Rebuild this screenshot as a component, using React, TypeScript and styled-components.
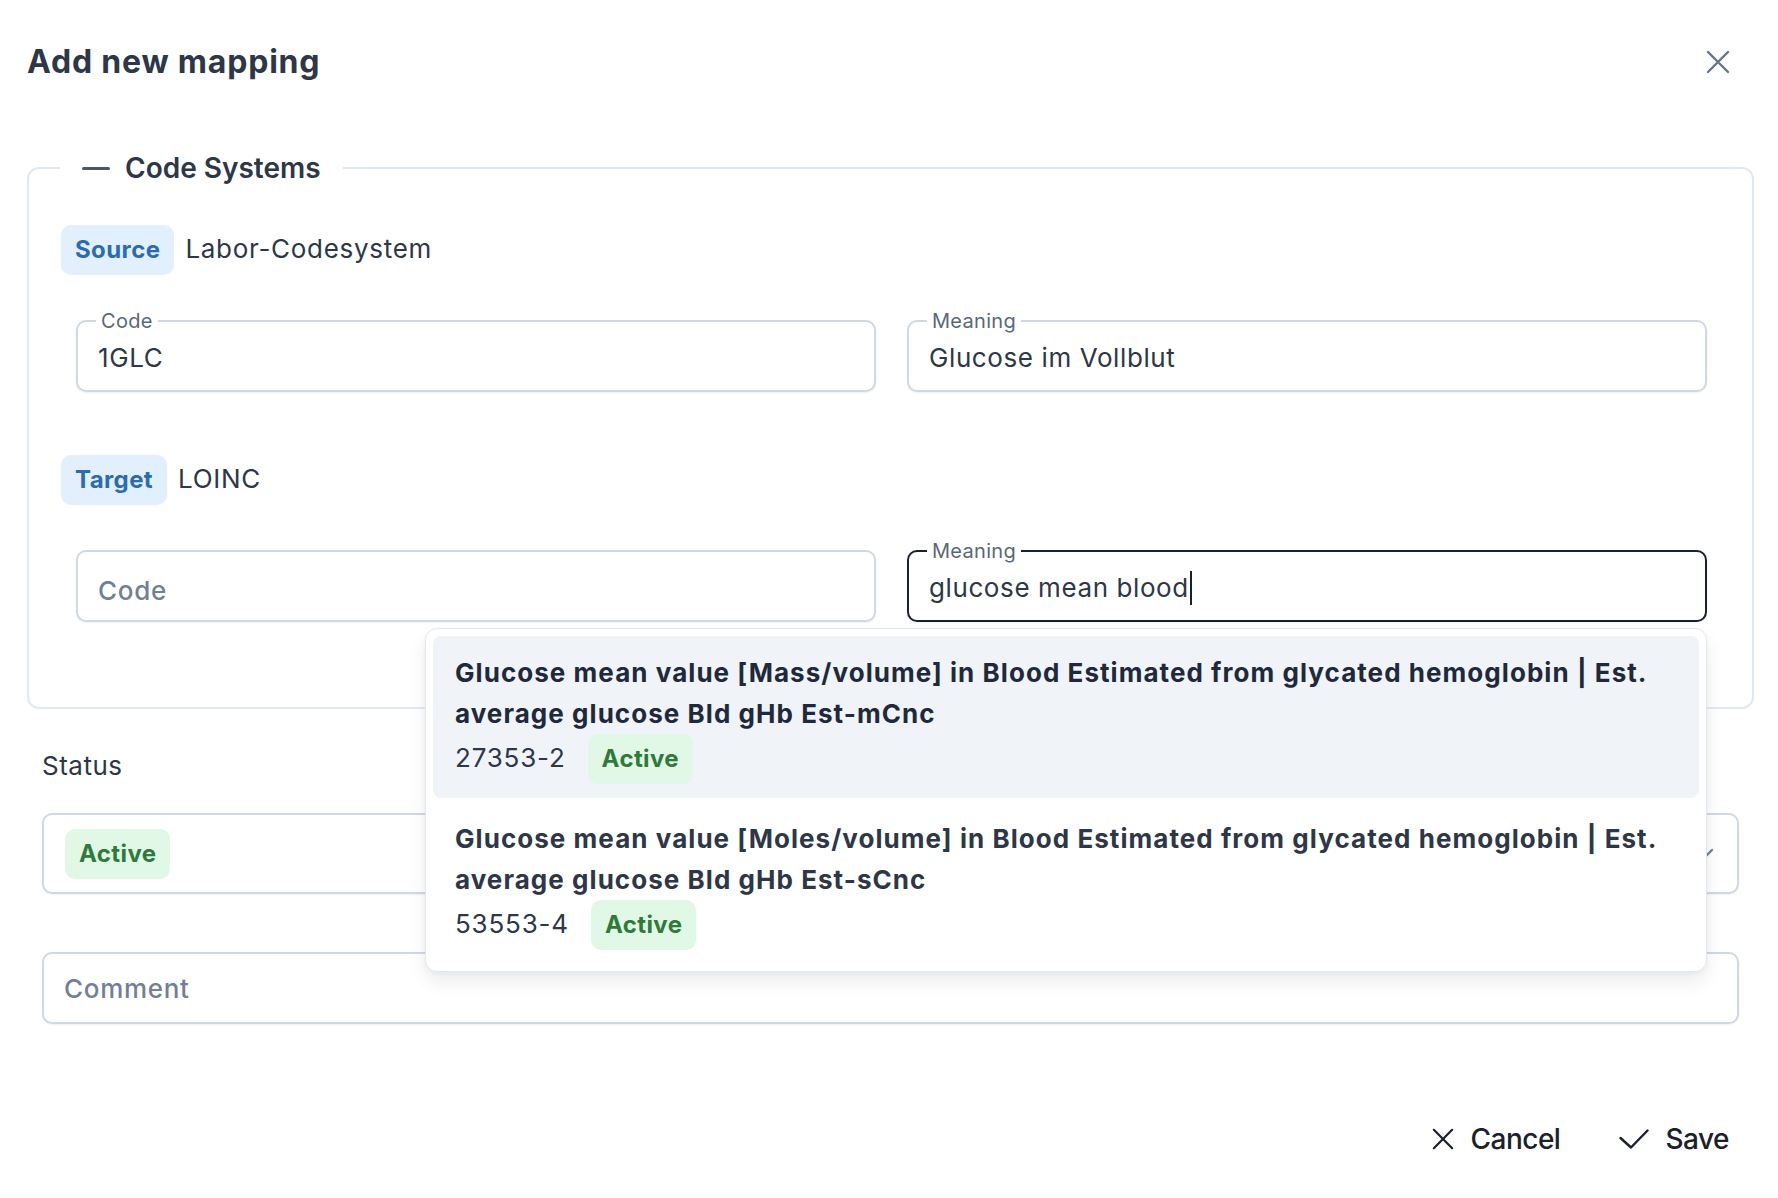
import React from 'react';
import styled, { createGlobalStyle } from 'styled-components';

const GlobalStyle = createGlobalStyle`
  *, *::before, *::after { box-sizing: border-box; }
  html, body { margin: 0; padding: 0; background: #ffffff; }
  body { font-family: Inter, "Noto Sans", sans-serif; color: #2d3748; }
`;

const Page = styled.div`
  width: 1778px;
  min-height: 1198px;
  padding: 0 24px 0 27px;
  background: #ffffff;
`;

const Header = styled.header`
  display: flex;
  align-items: center;
  justify-content: space-between;
  padding: 42px 24px 0 0;
`;

const Title = styled.h1`
  margin: 0;
  font-size: 32px;
  line-height: 40px;
  font-weight: 700;
  letter-spacing: 0.8px;
  color: #2d3748;
`;

const IconButton = styled.button`
  display: flex;
  padding: 0;
  border: 0;
  background: none;
  color: #64748b;
  cursor: pointer;
`;

const Group = styled.fieldset`
  margin: 68px 0 0;
  padding: 0;
  min-width: 0;
  border: 2px solid #e2e8f0;
  border-radius: 12px;
`;

const Legend = styled.legend`
  margin-left: 31px;
  padding: 0 22px;
  font-size: 28px;
  line-height: 36px;
  font-weight: 600;
  color: #2d3748;
`;

const Dash = styled.span`
  display: inline-block;
  width: 28px;
  height: 3px;
  margin-right: 15px;
  vertical-align: middle;
  background: #4a5568;
  border-radius: 2px;
  position: relative;
  top: -2px;
`;

const GroupBody = styled.div`
  padding: 39px 32px 85px;
`;

const SystemRow = styled.div<{ $gapTop?: number }>`
  display: flex;
  align-items: baseline;
  gap: 11px;
  margin-top: ${p => p.$gapTop ?? 0}px;
  font-size: 26px;
  letter-spacing: 0.7px;
  color: #2d3748;
`;

const Tag = styled.span<{ $tone: 'blue' | 'green' }>`
  display: inline-block;
  padding: 10px 14px;
  border-radius: 10px;
  font-size: 24px;
  line-height: 30px;
  font-weight: 700;
  letter-spacing: 0.4px;
  background: ${p => (p.$tone === 'blue' ? '#e2effc' : '#e1f8e6')};
  color: ${p => (p.$tone === 'blue' ? '#2b6cb0' : '#2f7a3b')};
`;

const FieldGrid = styled.div`
  display: grid;
  grid-template-columns: 1fr 1fr;
  gap: 31px;
  margin: 45px 13px 0 15px;
`;

const FieldBox = styled.div<{ $focused?: boolean }>`
  position: relative;
  display: flex;
  align-items: center;
  height: 72px;
  padding: 0 20px;
  border: 2px solid ${p => (p.$focused ? '#1a202c' : '#cfd8e3')};
  border-radius: 10px;
  background: #ffffff;
  box-shadow: 0 1px 2px rgba(15, 23, 42, 0.06);
`;

const FieldLabel = styled.span`
  position: absolute;
  top: -13px;
  left: 18px;
  padding: 0 5px;
  background: #ffffff;
  font-size: 20px;
  line-height: 24px;
  letter-spacing: 0.3px;
  color: #5a6779;
`;

const FieldValue = styled.span`
  display: flex;
  align-items: center;
  padding-top: 4px;
  font-size: 26px;
  line-height: 36px;
  letter-spacing: 0.6px;
  color: #2d3748;
`;

const Placeholder = styled.span<{ $shift?: number }>`
  padding-top: ${p => p.$shift ?? 2}px;
  font-size: 26px;
  line-height: 36px;
  font-weight: 500;
  letter-spacing: 0.7px;
  color: #718096;
`;

const Caret = styled.span`
  display: inline-block;
  width: 2px;
  height: 34px;
  margin-left: 1px;
  background: #1a202c;
`;

const Menu = styled.div`
  position: absolute;
  top: calc(100% + 8px);
  right: -2px;
  z-index: 10;
  width: 1282px;
  display: flex;
  flex-direction: column;
  gap: 4px;
  padding: 7px;
  background: #ffffff;
  border: 1px solid #e2e8f0;
  border-radius: 12px;
  box-shadow: 0 10px 18px rgba(15, 23, 42, 0.08), 0 2px 4px rgba(15, 23, 42, 0.04);
`;

const Option = styled.div<{ $active?: boolean }>`
  padding: 16px 10px 14px 22px;
  border-radius: 8px;
  background: ${p => (p.$active ? '#f0f3f8' : '#ffffff')};
`;

const OptionTitle = styled.div<{ $active?: boolean }>`
  font-size: 26px;
  line-height: 41px;
  font-weight: 700;
  letter-spacing: 1.05px;
  color: ${p => (p.$active ? '#1e293b' : '#2d3748')};
`;

const OptionMeta = styled.div`
  display: flex;
  align-items: baseline;
  gap: 22px;
  font-size: 26px;
  letter-spacing: 0.8px;
  color: #2d3748;
`;

const Lower = styled.div`
  padding: 0 15px;
`;

const StatusLabel = styled.div`
  margin-top: 39px;
  font-size: 26px;
  line-height: 36px;
  letter-spacing: 0.5px;
  color: #2d3748;
`;

const SelectBox = styled.div`
  display: flex;
  align-items: center;
  justify-content: space-between;
  height: 81px;
  margin-top: 29px;
  padding: 0 23px 0 21px;
  border: 2px solid #cfd8e3;
  border-radius: 10px;
  box-shadow: 0 1px 2px rgba(15, 23, 42, 0.06);
  color: #718096;
`;

const CommentWrap = styled.div`
  margin-top: 58px;
`;

const Footer = styled.footer`
  display: flex;
  justify-content: flex-end;
  gap: 15px;
  margin-top: 87px;
  padding-right: 3px;
`;

const ActionButton = styled.button`
  display: flex;
  align-items: center;
  gap: 16px;
  padding: 10px 22px;
  border: 0;
  background: none;
  font-family: Inter, "Noto Sans", sans-serif;
  font-size: 28px;
  line-height: 36px;
  font-weight: 500;
  letter-spacing: -0.5px;
  color: #1a202c;
  cursor: pointer;
`;

const XIcon = ({ size }: { size: number }) => (
  <svg width={size} height={size} viewBox="0 0 24 24" fill="none" stroke="currentColor" strokeWidth={2.4} strokeLinecap="round">
    <path d="M2 2 22 22M22 2 2 22" />
  </svg>
);

const CheckIcon = () => (
  <svg width="30" height="20" viewBox="0 0 30 20" fill="none" stroke="currentColor" strokeWidth={2.4} strokeLinecap="round" strokeLinejoin="round">
    <polyline points="1.5,9 12,18.5 28.5,1.5" />
  </svg>
);

const ChevronDown = () => (
  <svg width="20" height="12" viewBox="0 0 20 12" fill="none" stroke="currentColor" strokeWidth={2.4} strokeLinecap="round" strokeLinejoin="round">
    <polyline points="2,2 10,10 18,2" />
  </svg>
);

const options = [
  {
    title: 'Glucose mean value [Mass/volume] in Blood Estimated from glycated hemoglobin | Est. average glucose Bld gHb Est-mCnc',
    code: '27353-2',
    active: true,
  },
  {
    title: 'Glucose mean value [Moles/volume] in Blood Estimated from glycated hemoglobin | Est. average glucose Bld gHb Est-sCnc',
    code: '53553-4',
    active: false,
  },
];

export default function App() {
  return (
    <Page>
      <GlobalStyle />
      <Header>
        <Title>Add new mapping</Title>
        <IconButton aria-label="Close">
          <XIcon size={24} />
        </IconButton>
      </Header>

      <Group>
        <Legend>
          <Dash />
          Code Systems
        </Legend>
        <GroupBody>
          <SystemRow>
            <Tag $tone="blue">Source</Tag>
            <span>Labor-Codesystem</span>
          </SystemRow>
          <FieldGrid>
            <FieldBox>
              <FieldLabel>Code</FieldLabel>
              <FieldValue>1GLC</FieldValue>
            </FieldBox>
            <FieldBox>
              <FieldLabel>Meaning</FieldLabel>
              <FieldValue>Glucose im Vollblut</FieldValue>
            </FieldBox>
          </FieldGrid>

          <SystemRow $gapTop={63}>
            <Tag $tone="blue">Target</Tag>
            <span>LOINC</span>
          </SystemRow>
          <FieldGrid>
            <FieldBox>
              <Placeholder $shift={10}>Code</Placeholder>
            </FieldBox>
            <FieldBox $focused>
              <FieldLabel>Meaning</FieldLabel>
              <FieldValue>
                glucose mean blood
                <Caret />
              </FieldValue>
              <Menu>
                {options.map(o => (
                  <Option key={o.code} $active={o.active}>
                    <OptionTitle $active={o.active}>{o.title}</OptionTitle>
                    <OptionMeta>
                      <span>{o.code}</span>
                      <Tag $tone="green">Active</Tag>
                    </OptionMeta>
                  </Option>
                ))}
              </Menu>
            </FieldBox>
          </FieldGrid>
        </GroupBody>
      </Group>

      <Lower>
        <StatusLabel>Status</StatusLabel>
        <SelectBox>
          <Tag $tone="green">Active</Tag>
          <ChevronDown />
        </SelectBox>
        <CommentWrap>
          <FieldBox>
            <Placeholder>Comment</Placeholder>
          </FieldBox>
        </CommentWrap>
      </Lower>

      <Footer>
        <ActionButton>
          <XIcon size={22} />
          Cancel
        </ActionButton>
        <ActionButton>
          <CheckIcon />
          Save
        </ActionButton>
      </Footer>
    </Page>
  );
}
